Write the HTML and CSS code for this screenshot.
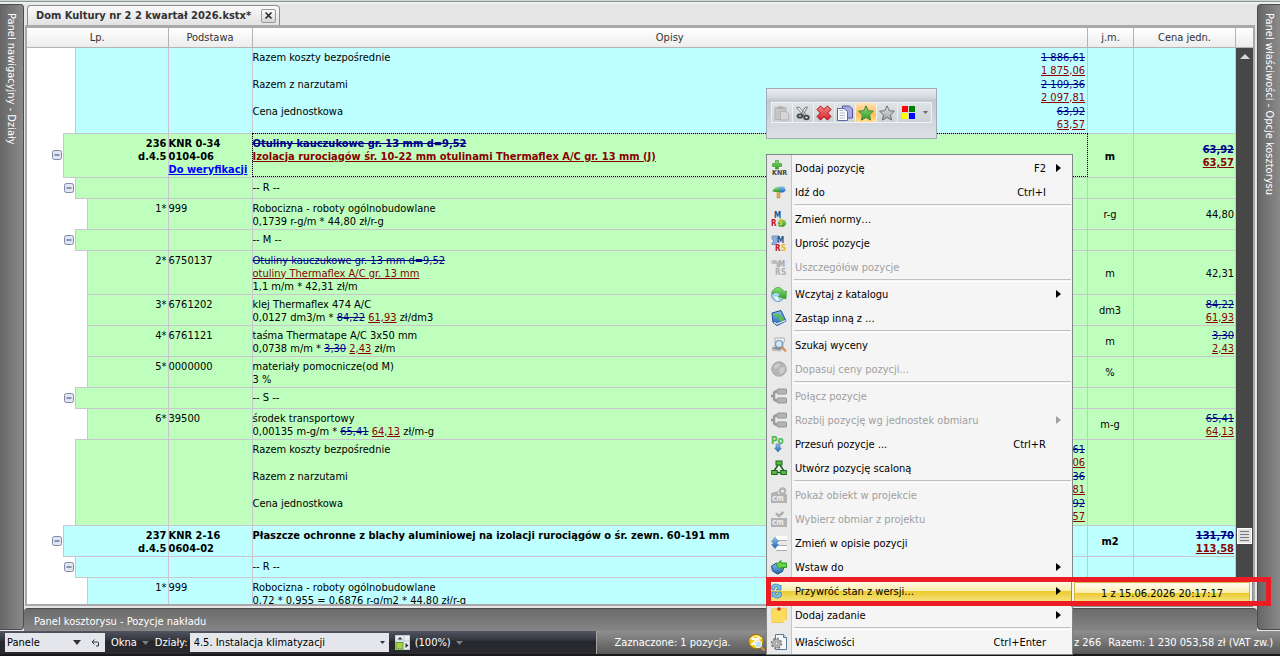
FILE: index.html
```html
<!DOCTYPE html>
<html lang="pl">
<head>
<meta charset="utf-8">
<title>Dom Kultury nr 2 2 kwartał 2026.kstx*</title>
<link rel="stylesheet" href="styles.css">
</head>
<body>
<svg class="defs" aria-hidden="true">
  <defs>
    <linearGradient id="gGreen" x1="0" y1="0" x2="0" y2="1"><stop offset="0" stop-color="#8be070"/><stop offset="1" stop-color="#2f9a2c"/></linearGradient>
    <linearGradient id="gBlue" x1="0" y1="0" x2="0" y2="1"><stop offset="0" stop-color="#8cc4f0"/><stop offset="1" stop-color="#1d63b0"/></linearGradient>
    <linearGradient id="gGrey" x1="0" y1="0" x2="0" y2="1"><stop offset="0" stop-color="#e6e6e6"/><stop offset="1" stop-color="#a0a0a0"/></linearGradient>
    <linearGradient id="gRed" x1="0" y1="0" x2="0" y2="1"><stop offset="0" stop-color="#f58a86"/><stop offset="1" stop-color="#d81f28"/></linearGradient>
    <symbol id="toggle" viewBox="0 0 10 10"><rect x=".5" y=".5" width="9" height="9" rx="2" fill="#e2e6f2" stroke="#7d88a6"/><path d="M2.500 5h5" stroke="#34406c"/></symbol>
    <symbol id="star" viewBox="0 0 16 16"><path d="M8 .8l2.200 4.900 5.200.5-3.900 3.600 1.100 5.300L8 12.400l-4.600 2.700 1.100-5.300L.6 6.200l5.200-.5z" stroke-linejoin="round"/></symbol>
    <symbol id="join" viewBox="0 0 16 16"><path d="M6 3.500H5Q3 3.500 3 6v4q0 2.500 2 2.500h1M0 8h3" fill="none" stroke="#999" stroke-width="2.500"/><rect x="6" y="1" width="9.500" height="5" rx="1" fill="#b4b4b4" stroke="#959595"/><rect x="6" y="10" width="9.500" height="5" rx="1" fill="#b4b4b4" stroke="#959595"/></symbol>
  </defs>
</svg>

<div class="window-edge"></div>
<div class="workspace">
  <aside class="side side-left"><span>Panel nawigacyjny - Działy</span></aside>

  <main class="center">
    <div class="tabs">
      <div class="tab"><span>Dom Kultury nr 2 2 kwartał 2026.kstx*</span>
        <button class="tab-close" aria-label="Zamknij"><svg width="7" height="7" viewBox="0 0 7 7"><path d="M.5.5l6 6M6.500.5l-6 6" stroke="#222" stroke-width="1.500"/></svg></button>
      </div>
    </div>
    <div class="frame">
      <div class="grid">
        <table>
          <colgroup><col class="c-gutter"><col class="c-step"><col class="c-step"><col class="c-lp"><col class="c-base"><col><col class="c-unit"><col class="c-price"></colgroup>
          <thead>
            <tr><th colspan="4" class="h-lp">Lp.</th><th>Podstawa</th><th>Opisy</th><th>j.m.</th><th>Cena jedn.</th></tr>
          </thead>
          <tbody class="cyan">
            <tr class="sum"><td class="g" colspan="2"></td><td colspan="2"></td><td></td>
              <td><div class="totals"><span>Razem koszty bezpośrednie</span><span class="num"><del>1 886,61</del><ins>1 875,06</ins></span><span>Razem z narzutami</span><span class="num"><del>2 109,36</del><ins>2 097,81</ins></span><span>Cena jednostkowa</span><span class="num"><del>63,92</del><ins>63,57</ins></span></div></td><td></td><td></td></tr>
          </tbody>
          <tbody class="green">
            <tr class="pos"><td class="g"><svg class="tg"><use href="#toggle"/></svg></td><td class="lp" colspan="3">236<br>d.4.5</td><td>KNR 0-34<br>0104-06<br><a href="#weryfikacja">Do weryfikacji</a></td><td class="selected"><del>Otuliny kauczukowe gr. 13 mm d=9,52</del><br><ins>Izolacja rurociągów śr. 10-22 mm otulinami Thermaflex A/C gr. 13 mm (J)</ins></td><td class="unit">m</td><td class="price"><del>63,92</del><br><ins>63,57</ins></td></tr>
            <tr><td class="g" colspan="2"><svg class="tg"><use href="#toggle"/></svg></td><td colspan="2"></td><td></td><td>-- R --</td><td></td><td></td></tr>
            <tr><td class="g" colspan="3"></td><td class="lp">1*</td><td>999</td><td>Robocizna - roboty ogólnobudowlane<br>0,1739 r-g/m * 44,80 zł/r-g</td><td class="unit">r-g</td><td class="price">44,80</td></tr>
            <tr><td class="g" colspan="2"><svg class="tg"><use href="#toggle"/></svg></td><td colspan="2"></td><td></td><td>-- M --</td><td></td><td></td></tr>
            <tr><td class="g" colspan="3"></td><td class="lp">2*</td><td>6750137</td><td><del>Otuliny kauczukowe gr. 13 mm d=9,52</del><br><ins>otuliny Thermaflex A/C gr. 13 mm</ins><br>1,1 m/m * 42,31 zł/m</td><td class="unit">m</td><td class="price">42,31</td></tr>
            <tr><td class="g" colspan="3"></td><td class="lp">3*</td><td>6761202</td><td>klej Thermaflex 474 A/C<br>0,0127 dm3/m * <del>84,22</del> <ins>61,93</ins> zł/dm3</td><td class="unit">dm3</td><td class="price"><del>84,22</del><br><ins>61,93</ins></td></tr>
            <tr><td class="g" colspan="3"></td><td class="lp">4*</td><td>6761121</td><td>taśma Thermatape A/C 3x50 mm<br>0,0738 m/m * <del>3,30</del> <ins>2,43</ins> zł/m</td><td class="unit">m</td><td class="price"><del>3,30</del><br><ins>2,43</ins></td></tr>
            <tr><td class="g" colspan="3"></td><td class="lp">5*</td><td>0000000</td><td>materiały pomocnicze(od M)<br>3 %</td><td class="unit">%</td><td></td></tr>
            <tr><td class="g" colspan="2"><svg class="tg"><use href="#toggle"/></svg></td><td colspan="2"></td><td></td><td>-- S --</td><td></td><td></td></tr>
            <tr><td class="g" colspan="3"></td><td class="lp">6*</td><td>39500</td><td>środek transportowy<br>0,00135 m-g/m * <del>65,41</del> <ins>64,13</ins> zł/m-g</td><td class="unit">m-g</td><td class="price"><del>65,41</del><br><ins>64,13</ins></td></tr>
            <tr class="sum"><td class="g" colspan="2"></td><td colspan="2"></td><td></td>
              <td><div class="totals"><span>Razem koszty bezpośrednie</span><span class="num"><del>1 886,61</del><ins>1 875,06</ins></span><span>Razem z narzutami</span><span class="num"><del>2 109,36</del><ins>2 097,81</ins></span><span>Cena jednostkowa</span><span class="num"><del>63,92</del><ins>63,57</ins></span></div></td><td></td><td></td></tr>
          </tbody>
          <tbody class="cyan">
            <tr class="pos"><td class="g"><svg class="tg"><use href="#toggle"/></svg></td><td class="lp" colspan="3">237<br>d.4.5</td><td>KNR 2-16<br>0604-02</td><td>Płaszcze ochronne z blachy aluminiowej na izolacji rurociągów o śr. zewn. 60-191 mm</td><td class="unit">m2</td><td class="price"><del>131,70</del><br><ins>113,58</ins></td></tr>
            <tr><td class="g" colspan="2"><svg class="tg"><use href="#toggle"/></svg></td><td colspan="2"></td><td></td><td>-- R --</td><td></td><td></td></tr>
            <tr><td class="g" colspan="3"></td><td class="lp">1*</td><td>999</td><td>Robocizna - roboty ogólnobudowlane<br>0,72 * 0,955 = 0,6876 r-g/m2 * 44,80 zł/r-g</td><td></td><td></td></tr>
          </tbody>
        </table>
      </div>
      <div class="scroll">
        <div class="scroll-head"></div>
        <svg class="scroll-up" width="10" height="6" viewBox="0 0 10 6"><path d="M0 6l5-5 5 5z" fill="#d8d8d8"/></svg>
        <div class="scroll-gap"></div>
        <div class="thumb"></div>
        <div class="scroll-rest"></div>
      </div>
    </div>
    <div class="bottom-panel">Panel kosztorysu - Pozycje nakładu</div>
  </main>

  <aside class="side side-right"><span>Panel właściwości - Opcje kosztorysu</span></aside>
</div>

<footer class="status">
  <div class="status-left">
    <div class="combo combo-panels"><select aria-label="Panele"><option>Panele</option></select>
      <svg class="arrow" width="8" height="5"><path d="M0 0h8L4 5z" fill="#333"/></svg>
      <button aria-label="Cofnij"><svg width="9" height="8" viewBox="0 0 9 8"><path d="M3.500.5L1 3l2.500 2.500M1 3h5.500q1 0 1 1v3H5" fill="none" stroke="#333"/></svg></button></div>
    <button class="drop">Okna <svg width="7" height="4"><path d="M0 0h7L3.500 4z" fill="#7a7c84"/></svg></button>
    <label for="dz">Działy:</label>
    <div class="combo combo-dept"><select id="dz"><option>4.5. Instalacja klimatyzacji</option></select>
      <svg class="arrow" width="5" height="3"><path d="M0 0h5L2.500 3z" fill="#333"/></svg></div>
    <button class="drop"><svg width="15" height="15" viewBox="0 0 15 15"><rect x=".5" y=".5" width="14" height="14" fill="#e8eef4" stroke="#c6cdd6"/><path d="M9 1v6M1 6h13" stroke="#c2ccd6"/><rect x="1" y="7.500" width="7" height="6.500" fill="#a3d24c" stroke="#649a25"/><path d="M2.500 4.500L5 2l2.500 2.500z" fill="#333"/><path d="M10.500 8v5l3-2.500z" fill="#333"/></svg> <span>(100%)</span> <svg width="7" height="4"><path d="M0 0h7L3.500 4z" fill="#7a7c84"/></svg></button>
  </div>
  <div class="status-right">
    <span>Zaznaczone: 1 pozycja.</span>
    <svg width="18" height="18" viewBox="0 0 18 18"><circle cx="8" cy="7.500" r="7.200" fill="#f5c81b" stroke="#9b7208"/><path d="M2 5.500Q8-1 14 5" fill="none" stroke="#fff1a0" stroke-width="1.500"/><path d="M4 5h5l-4.500 5H9M10.500 3v6" fill="none" stroke="#fff" stroke-width="1.800"/><circle cx="10.500" cy="10.500" r="3.200" fill="#b8e0f4" stroke="#f4faff"/><path d="M13 13l3.500 3.500" stroke="#e58b2c" stroke-width="2"/></svg>
    <span class="totals-note"><span>z 266</span><span>Razem: 1 230 053,58 zł (VAT zw.)</span></span>
  </div>
</footer>

<div class="mini" role="toolbar" aria-label="Edycja">
  <div class="mini-row">
    <button aria-label="Wklej"><svg viewBox="0 0 16 16"><rect x="1" y="2.500" width="11" height="12" rx="1" fill="#c6c6c6" stroke="#b2b2b2"/><path d="M4 3.500V2h1.500q1-2 2 0H9v1.500z" fill="#bbb" stroke="#aaa"/><path d="M6.500 6.500h5.500l2.500 2.500v6h-8z" fill="#d6d6d6" stroke="#b5b5b5"/></svg></button>
    <button aria-label="Wytnij"><svg viewBox="0 0 16 16"><path d="M1.500 2.500l2.500-.5L11 9.500 9 11zM12.500 2l-2.500.5L6 9l2 1.500z" fill="#eee" stroke="#666" stroke-width=".8"/><ellipse cx="5" cy="11" rx="2.500" ry="1.700" fill="none" stroke="#444" stroke-width="1.800"/><ellipse cx="11.500" cy="12.500" rx="2.300" ry="1.800" fill="none" stroke="#444" stroke-width="1.800"/></svg></button>
    <button aria-label="Usuń"><svg viewBox="0 0 16 16"><path d="M4.500 1L8 4.300 11.500 1 15 4.500 11.700 8l3.300 3.500-3.500 3.500L8 11.700 4.500 15 1 11.500 4.300 8 1 4.500z" fill="url(#gRed)" stroke="#a8121b" stroke-linejoin="round"/></svg></button>
    <button aria-label="Kopiuj"><svg viewBox="0 0 16 16"><path d="M5.500 1h7l3 3v9h-10z" fill="#a8a8e0" stroke="#5557a0"/><path d="M.5 3.500H7L10.500 6.500v9H.5z" fill="#fff" stroke="#5b68a8"/><path d="M2.500 8H8M2.500 10.500H8M2.500 13H8M2.500 5.500H6" stroke="#a6b7d8"/></svg></button>
    <button class="on" aria-label="Zaznacz"><svg fill="url(#gGreen)" stroke="#4b7c3c"><use href="#star"/></svg></button>
    <button aria-label="Odznacz"><svg fill="url(#gGrey)" stroke="#707070"><use href="#star"/></svg></button>
    <button aria-label="Kolor"><svg viewBox="0 0 16 16"><path d="M1 1h6v6H1z" fill="#f00"/><path d="M8 1h6v6H8z" fill="#008000"/><path d="M1 8h6v6H1z" fill="#ff0"/><path d="M8 8h6v6H8z" fill="#00f"/></svg></button>
    <button class="more" aria-label="Więcej"><svg viewBox="0 0 5 3"><path d="M0 0h5L2.500 3z" fill="#667"/></svg></button>
  </div>
</div>

<ul class="menu">
  <li><button><svg viewBox="0 0 16 16"><path d="M4.500.5h3v3h3v3h-3V9h-3V6.500h-3v-3h3z" fill="url(#gGreen)" stroke="#41a038" stroke-width=".7"/><text x="1" y="15" font-size="7" font-weight="700" fill="#444">KNR</text></svg><span>Dodaj pozycję</span><kbd>F2</kbd><i></i></button></li>
  <li><button><svg viewBox="0 0 16 16"><path d="M6 5h3v9H6z" fill="#e2ad58" stroke="#b77b32" stroke-width=".5"/><path d="M1 7l4-4h4v5H4z" fill="url(#gGreen)"/><path d="M7 2.500h6l2 4-3 2H9z" fill="url(#gBlue)"/></svg><span>Idź do</span><kbd>Ctrl+I</kbd></button></li>
  <li class="sep"></li>
  <li><button><svg viewBox="0 0 16 16"><path d="M9 8l5 2 1 3-2 2.500H8L7 12z" fill="url(#gGreen)" stroke="#49a744" stroke-width=".5"/><text x="3" y="7" font-size="8" font-weight="700" fill="#1f568c">M</text><text x="0" y="15" font-size="8" font-weight="700" fill="#c2151b">R</text><path d="M11.500 8.500H9Q7.500 10 9.500 11t1 2.500H8" fill="none" stroke="#e8c22d" stroke-width="1.500"/></svg><span>Zmień normy…</span></button></li>
  <li><button><svg viewBox="0 0 16 16"><path d="M1 1h7v2.500H5L7 6l-3 3.500h-3V8l2-2-2-2z" fill="#8faed8" stroke="#6d92c5"/><text x="6" y="8" font-size="8" font-weight="700" fill="#1f568c">M</text><text x="4" y="16" font-size="8" font-weight="700" fill="#c2151b">R</text><text x="10" y="16" font-size="8" font-weight="700" fill="#e9b820">S</text></svg><span>Uprość pozycje</span></button></li>
  <li><button disabled><svg viewBox="0 0 16 16"><path d="M0 2q6-3 8 3l2-1-2 5-4-2 2-1Q5 4 1 5z" fill="#bcbcbc"/><text x="7" y="8" font-size="8" font-weight="700" fill="#aaa">M</text><text x="4" y="16" font-size="8" font-weight="700" fill="#b0b0b0">R</text><text x="10" y="16" font-size="8" font-weight="700" fill="#b0b0b0">S</text></svg><span>Uszczegółów pozycje</span></button></li>
  <li class="sep"></li>
  <li><button><svg viewBox="0 0 16 16"><circle cx="7" cy="9" r="6.500" fill="#a5d5ea" stroke="#6b9cc4"/><path d="M3 10l4 1 1 4-3-.5z" fill="#e8f6f4"/><path d="M1 5.500Q7-3 13 5.500l2.500-.5-.5 8-8-2.500L9.500 9Q6 4 1.500 8z" fill="url(#gGreen)" stroke="#359b37" stroke-width=".6"/></svg><span>Wczytaj z katalogu</span><i></i></button></li>
  <li><button><svg viewBox="0 0 16 16"><path d="M1 3l9-2.500 5 10.500-9 4.500-4-3z" fill="url(#gBlue)" stroke="#1c528e"/><path d="M3 12.500l3 1.500 8.500-3.500" fill="none" stroke="#eef6fc" stroke-width="1.200"/><path d="M3 4.500q6-2 8 3l2-1-1 5-5-2 2-1Q7 6 4 7z" fill="#57c04a"/></svg><span>Zastąp inną z ...</span></button></li>
  <li class="sep"></li>
  <li><button><svg viewBox="0 0 16 16"><path d="M4 1h9l1 3-2 1v7l-3 2-8-1 1-3h2z" fill="#eee" stroke="#999" stroke-width=".7"/><path d="M1 12l3-2h8l-3 3z" fill="#888"/><circle cx="8" cy="7" r="3.500" fill="#cfe7fa" stroke="#7897b2" stroke-width="1.200"/><path d="M11 10l4 4.500" stroke="#dc8f4f" stroke-width="2"/></svg><span>Szukaj wyceny</span></button></li>
  <li><button disabled><svg viewBox="0 0 16 16"><circle cx="8" cy="8" r="7.200" fill="#b7b7b7" stroke="#a3a3a3"/><path d="M3 5q3-3 6-2l-1 3-4 2zM9 7l5-1-1 5-3 2-2-3z" fill="#ccc"/></svg><span>Dopasuj ceny pozycji...</span></button></li>
  <li class="sep"></li>
  <li><button disabled><svg><use href="#join"/></svg><span>Połącz pozycje</span></button></li>
  <li><button disabled><svg><use href="#join"/></svg><span>Rozbij pozycję wg jednostek obmiaru</span><i></i></button></li>
  <li><button><svg viewBox="0 0 16 16"><text x="0" y="8" font-size="10" font-weight="700" fill="#4cb944">Po</text><path d="M5 8h4v4h1.500L7 16l-3.500-4H5z" fill="url(#gBlue)" stroke="#4c79b5" stroke-width=".6"/></svg><span>Przesuń pozycje ...</span><kbd>Ctrl+R</kbd></button></li>
  <li><button><svg viewBox="0 0 16 16"><path d="M7 5l-4 6M9 5l4 6M3 12.500h10" stroke="#1c651c" stroke-width="1.500"/><rect x="5" y="1" width="6" height="4" fill="#5cb948" stroke="#1d641b"/><rect x=".7" y="10.500" width="5.500" height="4" fill="#5cb948" stroke="#1d641b"/><rect x="9.800" y="10.500" width="5.500" height="4" fill="#5cb948" stroke="#1d641b"/></svg><span>Utwórz pozycję scaloną</span></button></li>
  <li class="sep"></li>
  <li><button disabled><svg viewBox="0 0 16 16"><path d="M0 6l7-2v3h9v9H0z" fill="#b2b2b2"/><circle cx="11.500" cy="4" r="2.700" fill="none" stroke="#b2b2b2" stroke-width="2.200"/><text x="1" y="14" font-size="8" font-weight="700" fill="#eee">cm</text></svg><span>Pokaż obiekt w projekcie</span></button></li>
  <li><button disabled><svg viewBox="0 0 16 16"><path d="M0 7h16v9H0z" fill="#b2b2b2"/><path d="M5 2.500l3 2.500 4.500-4" fill="none" stroke="#b0b0b0" stroke-width="2.500"/><text x="1" y="14" font-size="8" font-weight="700" fill="#eee">cm</text></svg><span>Wybierz obmiar z projektu</span></button></li>
  <li><button><svg viewBox="0 0 16 16"><path d="M5 1h11v4H5zM5 11h11v4H5z" fill="#fff"/><path d="M5 5.500h11M7 10.500h9M5 15.500h11" stroke="#aaa"/><path d="M4 2.500l3.500 4H6v3h1.500L4 13.500.5 9.500H2v-3H.5z" fill="url(#gBlue)" stroke="#3c78b5" stroke-width=".6"/></svg><span>Zmień w opisie pozycji</span></button></li>
  <li><button><svg viewBox="0 0 16 16"><path d="M.5 7l5-3 7 5-1 3.500-5 2.500-5-3z" fill="url(#gBlue)" stroke="#194d82"/><path d="M5 6l5-4.500v2.500h5.500v4.500H10v2z" fill="#6ad345" stroke="#2d9b2d"/></svg><span>Wstaw do</span><i></i></button></li>
  <li class="active"><button><svg viewBox="0 0 16 16"><path d="M1 7q-2-6 4-6 3 0 4 2l1-1v5H5l2-2Q4 2 3.500 7z" fill="#79bce5" stroke="#307cae" stroke-width=".7"/><path d="M10 9q2 6-4 6-3 0-4-2l-1 1V9h5l-2 2q3 3 3.500-2z" fill="#79bce5" stroke="#307cae" stroke-width=".7"/></svg><span>Przywróć stan z wersji…</span><i></i></button>
    <ul class="submenu"><li><button>1 z 15.06.2026 20:17:17</button></li></ul>
    <div class="callout"></div></li>
  <li><button><svg viewBox="0 0 16 16"><path d="M.5 2l15-1v12l-3 2.500H1z" fill="#fbdc5d" stroke="#e8bd3c" stroke-width=".6"/><path d="M15.500 13l-3 2.500V13z" fill="#fff3ad"/><circle cx="8" cy="2" r="1.800" fill="#d8331f"/></svg><span>Dodaj zadanie</span><i></i></button></li>
  <li class="sep"></li>
  <li><button><svg viewBox="0 0 16 16"><path d="M4.500.5h8l3 3v12h-11z" fill="#f4f8fc" stroke="#5d7892"/><path d="M12.500.5v3h3" fill="#cfe0ee" stroke="#5d7892"/><circle cx="5.500" cy="9.500" r="5" fill="none" stroke="#777" stroke-width="1.500" stroke-dasharray="2 1.900"/><circle cx="5.500" cy="9.500" r="4" fill="#c2c2c2" stroke="#777" stroke-width=".8"/><circle cx="5.500" cy="9.500" r="1.500" fill="#fff" stroke="#777"/></svg><span>Właściwości</span><kbd>Ctrl+Enter</kbd></button></li>
</ul>
</body>
</html>
```
FILE: styles.css
```css
* { box-sizing: border-box; }
html, body { height: 100%; }
body {
  margin: 0;
  display: flex;
  flex-direction: column;
  overflow: hidden;
  background: #e6e6e6;
  color: #000;
  font: 11px/13px "DejaVu Sans Condensed", "DejaVu Sans", sans-serif;
}
button, select { font: inherit; color: inherit; margin: 0; padding: 0; border: 0; background: none; }
svg { display: block; flex: none; }
.defs { position: absolute; width: 0; height: 0; }

.window-edge { height: 4px; flex: none; background: linear-gradient(#cfd5d5 0 1px, #8e9696 1px 2px, #eee 2px); }
.workspace { flex: 1; min-height: 0; display: flex; }

.side {
  flex: none;
  margin-bottom: 1px;
  padding-top: 8px;
  display: flex;
  justify-content: center;
  border: 1px solid #4c4c4c;
  background: linear-gradient(90deg, #666, #8a8a8a);
  color: #fff;
}
.side span { writing-mode: vertical-rl; white-space: nowrap; }
.side-left { width: 24px; border-left: 0; border-radius: 0 4px 4px 0; }
.side-right { width: 23px; border-right: 0; border-radius: 4px 0 0 4px; }

.center { flex: 1; min-width: 0; display: flex; flex-direction: column; }
.tabs { height: 21px; flex: none; padding: 1px 0 0 3px; display: flex; }
.tab {
  display: flex;
  align-items: center;
  gap: 10px;
  padding: 0 3px 0 8px;
  border: 1px solid #8c8c8c;
  border-bottom: 0;
  border-radius: 4px 4px 0 0;
  background: linear-gradient(#fafafa, #e2e2e2);
  color: #333;
  font-weight: 700;
  white-space: nowrap;
}
.tab-close {
  width: 15px;
  height: 14px;
  display: grid;
  place-items: center;
  border: 1px solid #999;
  border-radius: 2px;
  background: linear-gradient(#fff, #d4d4d4);
}
.frame {
  flex: 1;
  min-height: 0;
  margin: 0 2px 0 1px;
  display: flex;
  border: 2px solid #a9a9a9;
  border-top-width: 3px;
  background: #fff;
}
.grid { flex: 1; min-width: 0; overflow: hidden; }

table { width: 100%; table-layout: fixed; border-collapse: collapse; }
.c-gutter { width: 36px; }
.c-step { width: 12px; }
.c-lp { width: 81px; }
.c-base { width: 84px; }
.c-unit { width: 46px; }
.c-price { width: 102px; }
thead tr { height: 19px; }
th {
  height: 19px;
  padding: 0;
  border: 1px solid #b4b4b4;
  border-top: 0;
  background: linear-gradient(#fff, #ececec);
  color: #333;
  font-weight: 400;
}
.h-lp { border-left: 0; }
td { padding: 3px 1px 1px 0; border: 1px solid #c9c6d0; vertical-align: top; white-space: nowrap; }
tbody tr { height: 21px; }
tbody .sum { height: 86px; }
.green td { background: #beffbe; }
.cyan td { background: #beffff; }
tbody td.g { padding: 0 1px; border: 0; background: #fff; vertical-align: middle; }
.green .g + td, .cyan .g + td { border-left: 1px solid #c9c6d0; }
.tg { width: 10px; height: 10px; margin-left: auto; }
td.lp { text-align: right; }
td.unit { text-align: center; vertical-align: middle; }
td.price { text-align: right; vertical-align: middle; }
.pos { font-weight: 700; }
.pos td { height: 31px; }
.selected { outline: 1px dotted #000; outline-offset: -1px; }
del { color: #00008b; text-decoration: line-through; }
ins { color: #8b0000; text-decoration: underline; }
td a { color: #00f; text-decoration: underline; }
.totals { display: grid; grid-template-columns: 1fr auto; grid-auto-rows: 27px; padding-right: 1px; }
.num { display: flex; flex-direction: column; align-items: flex-end; }

.scroll { width: 17px; flex: none; display: flex; flex-direction: column; align-items: center; background: #474747; }
.scroll-head { width: 100%; height: 20px; border-bottom: 1px solid #b4b4b4; background: linear-gradient(#fff, #ececec); }
.scroll-up { margin-top: 5px; }
.scroll-gap { flex: 469; }
.thumb {
  width: 15px;
  height: 16px;
  border: 1px solid #fff;
  background: repeating-linear-gradient(#777 0 1px, #e2e2e2 1px 3px) center / 9px 10px no-repeat, #e2e2e2;
}
.scroll-rest { flex: 60; }
.bottom-panel {
  height: 23px;
  flex: none;
  margin-top: 2px;
  padding: 6px 10px;
  border-top: 1px solid #4c4c4c;
  border-radius: 4px 4px 0 0;
  background: linear-gradient(#6a6a6a, #868686);
  color: #fff;
}

.status { height: 25px; flex: none; display: flex; border-bottom: 2px solid #18181a; color: #fff; white-space: nowrap; }
.status-left {
  flex: 0 0 46.6%;
  display: flex;
  align-items: center;
  gap: 6px;
  padding-left: 5px;
  background: linear-gradient(#515561, #33353d 40%, #26272c 45%, #2b2c31);
}
.combo { height: 19px; display: flex; align-items: center; background: #e4e6ec; color: #000; }
.combo select { flex: 1; min-width: 0; height: 100%; appearance: none; padding-left: 2px; }
.combo-panels { width: 100px; gap: 10px; padding-right: 5px; }
.combo-dept { width: 199px; margin-left: -4px; padding-right: 4px; }
.combo-dept select { padding-left: 4px; }
.drop { display: flex; align-items: center; gap: 5px; }
.status-right {
  flex: 1;
  min-width: 0;
  display: flex;
  align-items: center;
  gap: 17px;
  padding: 0 7px 0 17px;
  border-left: 1px solid #a0a0a0;
  background: linear-gradient(#8f8f8f, #585858);
}
.totals-note { margin-left: auto; display: flex; gap: 7px; }

.mini {
  position: absolute;
  left: 766px;
  top: 88px;
  padding: 13px 4px 15px;
  border: 1px solid #a2abb8;
  background: linear-gradient(#eceef2, #d2d7de 18%, #c3c9d1 22%, #dde1e6);
}
.mini-row { display: flex; height: 21px; border: 1px solid #f0f3f5; background: linear-gradient(#dfe3e6, #ccd2d6); }
.mini button { width: 21px; display: grid; place-items: center; border-right: 1px solid #eef1f3; }
.mini button svg { width: 16px; height: 16px; }
.mini button.on { background: linear-gradient(#ffe3b5, #ffc05a 60%, #ffe08e); }
.mini button:nth-child(7) { border-right: 0; }
.mini button.more { width: 12px; border-right: 0; }
.mini button.more svg { width: 5px; height: 3px; }

.menu, .submenu { margin: 0; padding: 0; list-style: none; }
.menu {
  position: absolute;
  left: 766px;
  top: 154px;
  width: 307px;
  padding: 1px 1px 0;
  border: 1px solid #7f8787;
  background: linear-gradient(90deg, #e9e9e9 24px, #c4c4c4 24px 25px, #f5f5f5 25px);
}
.menu > li { position: relative; }
.menu > li > button {
  width: 100%;
  height: 24px;
  display: grid;
  grid-template-columns: 16px 1fr auto 13px;
  align-items: center;
  column-gap: 8px;
  padding: 0 4px 0 3px;
  text-align: left;
}
.menu > li > button > svg { width: 16px; height: 16px; overflow: visible; }
.menu button:disabled { color: #a0a0a0; }
.menu kbd { font: inherit; grid-column: 3; }
.menu i {
  grid-column: 4;
  width: 5px;
  height: 8px;
  margin-left: 2px;
  background: currentColor;
  clip-path: polygon(0 0, 100% 50%, 0 100%);
}
.menu .sep { height: 3px; margin-left: 26px; border-top: 1px solid #c0c0c0; border-bottom: 1px solid #fff; }
.menu .active > button, .submenu button {
  background: linear-gradient(#fffbe8 10%, #f9eeae 48%, #eccb2e 52%, #f8e68c);
}
.submenu {
  position: absolute;
  left: 100%;
  top: 0;
  width: 182px;
  padding: 2px;
  border: 1px solid #8c8c8c;
  background: #f5f5f5;
}
.submenu button { width: 100%; height: 22px; border: 1px solid #d9b64a; }
.callout {
  position: absolute;
  left: -2px;
  top: -2px;
  width: 505px;
  height: 29px;
  border: 5px solid #ec1c24;
  pointer-events: none;
}
```
